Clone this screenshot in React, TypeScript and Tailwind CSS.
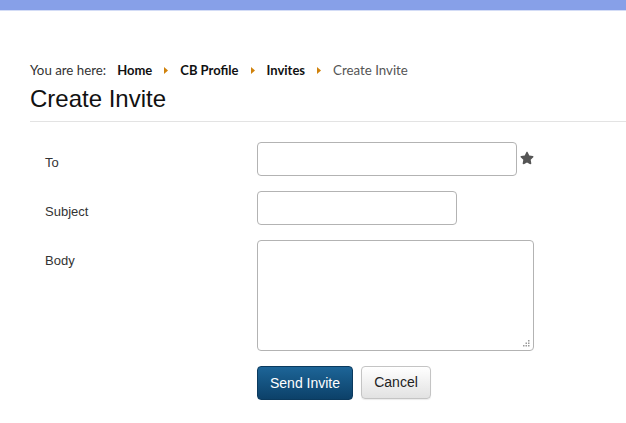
import { FaStar } from 'react-icons/fa';

const crumbs = ['Home', 'CB Profile', 'Invites'];

const Arrow = () => (
  <svg width="4" height="7" viewBox="0 0 4 7" className="mx-[12px]">
    <path d="M0 0 L4 3.5 L0 7 Z" fill="#d0820c" />
  </svg>
);

const CreateInvite = () => {
  return (
    <div className="min-h-screen bg-white font-['Liberation_Sans',Arial,sans-serif]">
      <div className="h-[10px] bg-[#87a0e8] border-b border-[#d3dcf6] box-content" />

      <div className="pl-[30px] pt-[49px]">
        {/* breadcrumb */}
        <div className="flex items-center h-[20px] text-[13.3px] leading-[20px] font-['Lato',sans-serif] text-[#333]">
          <span>You are here:</span>
          <span className="ml-[11px] flex items-center">
            {crumbs.map((c) => (
              <span key={c} className="flex items-center">
                <span className="font-bold text-[13px] text-[#111]">{c}</span>
                <Arrow />
              </span>
            ))}
            <span className="text-[#555]">Create Invite</span>
          </span>
        </div>

        <h1 className="mt-[5px] text-[24px] leading-[28px] text-[#111]">Create Invite</h1>
        <div className="mt-[8px] h-px bg-[#e3e3e3]" />

        {/* form */}
        <div className="mt-[20px] flex flex-col gap-[15px] text-[13px] text-[#333]">
          <div className="flex">
            <label className="w-[227px] pl-[15px] pt-[11px] leading-[20px]">To</label>
            <div className="flex items-center">
              <input className="w-[260px] h-[34px] rounded-[4px] border border-[#b3b3b3] px-2 outline-none" />
              <FaStar className="ml-[3px] -mt-[2px] text-[14px] text-[#555]" />
            </div>
          </div>

          <div className="flex">
            <label className="w-[227px] pl-[15px] pt-[11px] leading-[20px]">Subject</label>
            <input className="w-[200px] h-[34px] rounded-[4px] border border-[#b3b3b3] px-2 outline-none" />
          </div>

          <div className="flex">
            <label className="w-[227px] pl-[15px] pt-[11px] leading-[20px]">Body</label>
            <div className="relative">
              <textarea className="block w-[277px] h-[111px] rounded-[4px] border border-[#b3b3b3] px-2 outline-none resize-none" />
              <svg width="7" height="7" viewBox="0 0 7 7" className="absolute right-[4px] bottom-[4px]">
                <rect x="5" y="0" width="1.5" height="1.5" fill="#9a9a9a" />
                <rect x="2.5" y="2.5" width="1.5" height="1.5" fill="#9a9a9a" />
                <rect x="5" y="2.5" width="1.5" height="1.5" fill="#9a9a9a" />
                <rect x="0" y="5" width="1.5" height="1.5" fill="#9a9a9a" />
                <rect x="2.5" y="5" width="1.5" height="1.5" fill="#9a9a9a" />
                <rect x="5" y="5" width="1.5" height="1.5" fill="#9a9a9a" />
              </svg>
            </div>
          </div>

          <div className="flex pl-[227px] gap-[8px]">
            <button className="w-[96px] h-[34px] rounded-[4px] border border-[#0b3a5e] bg-gradient-to-b from-[#1d6598] to-[#0c4169] text-white text-[14px]">
              Send Invite
            </button>
            <button className="w-[70px] h-[33px] rounded-[4px] border border-[#c4c4c4] bg-gradient-to-b from-white to-[#e2e2e2] text-[#222] text-[14px] shadow-[0_1px_1px_rgba(0,0,0,0.08)]">
              Cancel
            </button>
          </div>
        </div>
      </div>
    </div>
  );
};

export default CreateInvite;
